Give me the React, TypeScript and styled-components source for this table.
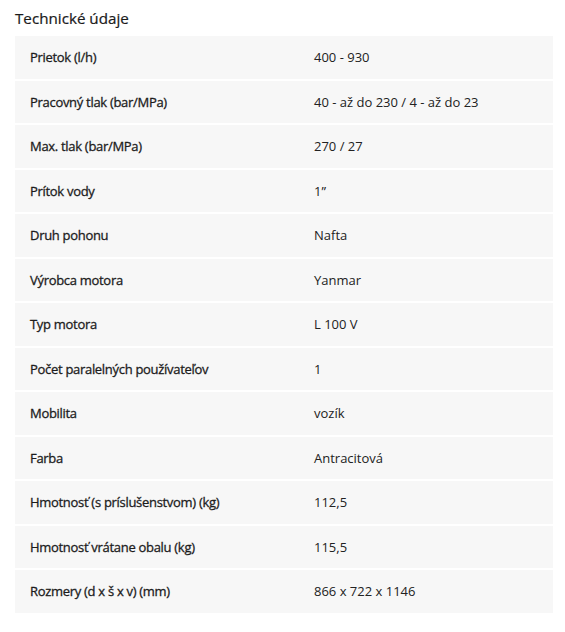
import React from "react";
import styled, { createGlobalStyle } from "styled-components";

const Global = createGlobalStyle`
  html, body { margin: 0; padding: 0; background: #fff; }
  body { font-family: "Open Sans", "Noto Sans", sans-serif; color: #222; }
`;

const Page = styled.div`
  padding: 8px 12px 0 15px;
`;

const Title = styled.h2`
  margin: 0 0 8px 0;
  font-size: 15.2px;
  font-weight: 400;
  line-height: 20px;
  color: #1a1a1a;
  -webkit-text-stroke: 0.2px #1a1a1a;
`;

const Table = styled.div`
  display: flex;
  flex-direction: column;
  gap: 2px;
  width: 538px;
`;

const Row = styled.div`
  display: grid;
  grid-template-columns: 284px 1fr;
  align-items: center;
  height: 42.5px;
  background: #f7f7f7;
  font-size: 13px;
  color: #222;
`;

const Cell = styled.div<{ $label?: boolean }>`
  padding: 0 15px;
  font-weight: 400;
  font-size: 13px;
  letter-spacing: ${(p) => (p.$label ? "-0.3px" : "0")};
  color: ${(p) => (p.$label ? "#1c1c1c" : "#222")};
  -webkit-text-stroke: ${(p) => (p.$label ? "0.3px #1c1c1c" : "0")};
`;

const data: [string, string][] = [
  ["Prietok (l/h)", "400 - 930"],
  ["Pracovný tlak (bar/MPa)", "40 - až do 230 / 4 - až do 23"],
  ["Max. tlak (bar/MPa)", "270 / 27"],
  ["Prítok vody", "1”"],
  ["Druh pohonu", "Nafta"],
  ["Výrobca motora", "Yanmar"],
  ["Typ motora", "L 100 V"],
  ["Počet paralelných používateľov", "1"],
  ["Mobilita", "vozík"],
  ["Farba", "Antracitová"],
  ["Hmotnosť (s príslušenstvom) (kg)", "112,5"],
  ["Hmotnosť vrátane obalu (kg)", "115,5"],
  ["Rozmery (d x š x v) (mm)", "866 x 722 x 1146"],
];

export default function App() {
  return (
    <>
      <Global />
      <Page>
        <Title>Technické údaje</Title>
        <Table>
          {data.map(([k, v]) => (
            <Row key={k}>
              <Cell $label>{k}</Cell>
              <Cell>{v}</Cell>
            </Row>
          ))}
        </Table>
      </Page>
    </>
  );
}
